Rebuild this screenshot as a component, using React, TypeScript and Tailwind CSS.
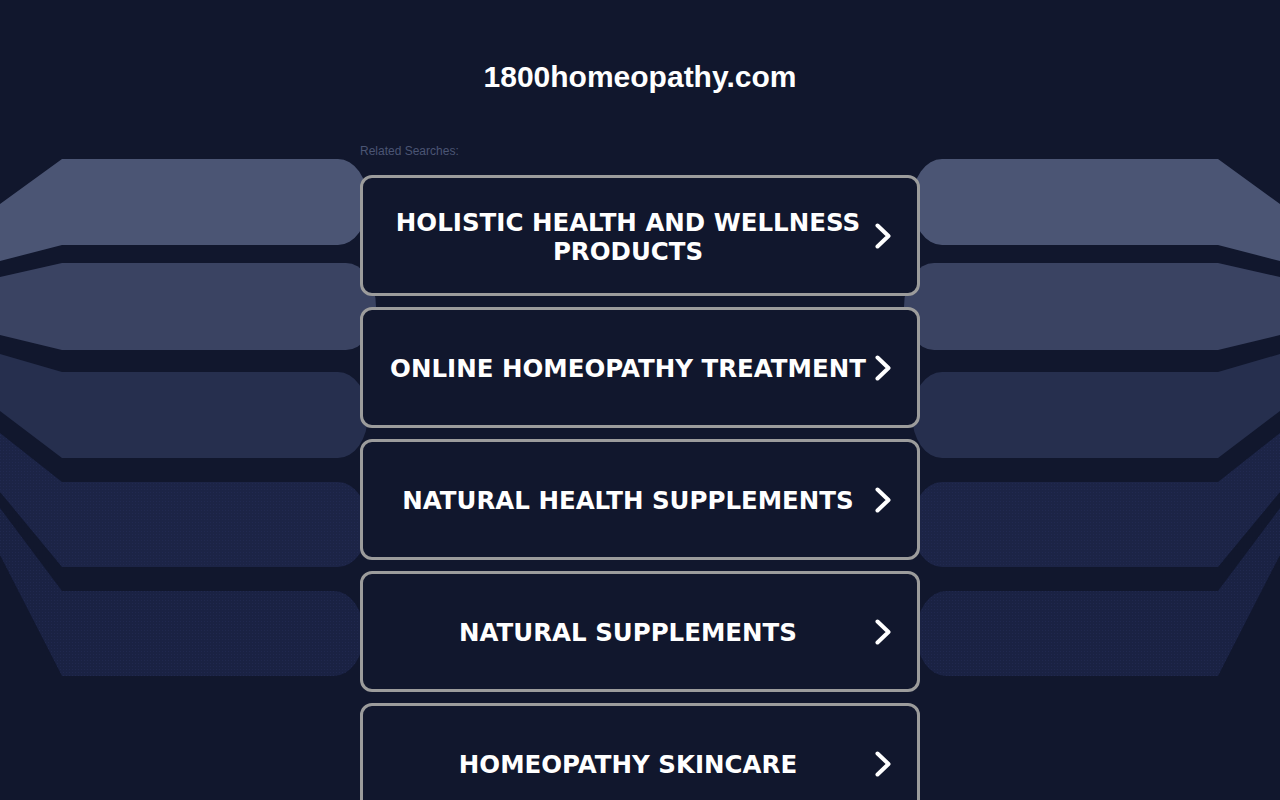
const searches = [
  "Holistic Health and Wellness Products",
  "Online Homeopathy Treatment",
  "Natural Health Supplements",
  "Natural Supplements",
  "Homeopathy Skincare",
];

// left-hand bands: [topAtEdge, botAtEdge, top, bottom, colour]
const bands: [number, number, number, number, string][] = [
  [204, 261, 159, 245, "#4b5574"],
  [277, 335, 263, 350, "#3a4362"],
  [354, 411, 372, 458, "#262f4e"],
  [433, 492, 482, 567, "#1c2446"],
  [508, 555, 591, 676, "#1a2243"],
];

const bandPath = ([a, b, t, bt]: [number, number, number, number, string], end: number) => {
  const r = (bt - t) / 2;
  return `M0 ${a} L62 ${t} L${end} ${t} A30 ${r} 0 0 1 ${end} ${bt} L62 ${bt} L0 ${b} Z`;
};

const Backdrop = () => {
  const ends = [338, 346, 338, 338, 334];
  return (
    <svg
      className="absolute left-1/2 top-0 -translate-x-1/2 pointer-events-none"
      width={1280}
      height={800}
      viewBox="0 0 1280 800"
    >
      <defs>
        <pattern id="dots" width="3" height="3" patternUnits="userSpaceOnUse">
          <rect width="1" height="1" fill="#2a3360" opacity="0.35" />
        </pattern>
      </defs>
      {bands.map((b, i) => {
        const d = bandPath(b, ends[i]);
        return (
          <g key={i}>
            <path d={d} fill={b[4]} />
            <path d={d} fill={b[4]} transform="translate(1280 0) scale(-1 1)" />
            {i > 2 && (
              <>
                <path d={d} fill="url(#dots)" />
                <path d={d} fill="url(#dots)" transform="translate(1280 0) scale(-1 1)" />
              </>
            )}
          </g>
        );
      })}
    </svg>
  );
};

const Chevron = () => (
  <svg width="16" height="26" viewBox="0 0 16 26" fill="none">
    <path d="M2.5 2.5 L13.5 13 L2.5 23.5" stroke="#fff" strokeWidth={4} strokeLinecap="round" strokeLinejoin="round" />
  </svg>
);

export default function App() {
  return (
    <div className="relative min-h-screen overflow-hidden bg-[#11172d]">
      <Backdrop />
      <div className="relative pt-[60px]">
        <h1
          className="text-center text-[30px] leading-[34px] font-bold text-white"
          style={{ fontFamily: '"Liberation Sans", Arial, sans-serif' }}
        >
          1800homeopathy.com
        </h1>
        <div className="mx-auto mt-[50px] w-[560px]">
          <p
            className="mb-[17px] text-[12px] leading-[14px] text-[#4b5574]"
            style={{ fontFamily: '"Liberation Sans", Arial, sans-serif' }}
          >
            Related Searches:
          </p>
          {searches.map((s) => (
            <a
              key={s}
              href="#"
              className="mb-[11px] flex h-[121px] items-center rounded-[12px] border-[3px] border-[#9c9c9c] bg-[#11172d] pl-[22px] pr-[22px]"
            >
              <span
                className="flex-1 pt-[2px] text-center text-[24.5px] leading-[29px] font-bold uppercase text-white"
                style={{ fontFamily: '"DejaVu Sans", Verdana, sans-serif' }}
              >
                {s}
              </span>
              <span className="flex w-[24px] justify-center">
                <Chevron />
              </span>
            </a>
          ))}
        </div>
      </div>
    </div>
  );
}
